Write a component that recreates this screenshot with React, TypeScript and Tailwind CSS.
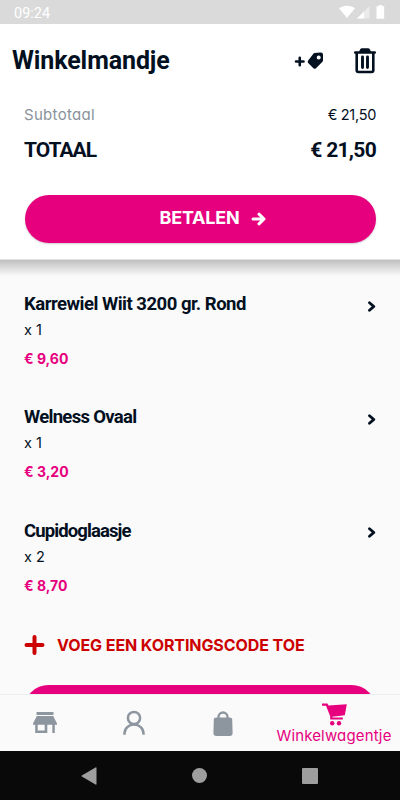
const items = [
  { title: 'Karrewiel Wiit 3200 gr. Rond', amount: 'x 1', price: '€ 9,60', tracking: 'tracking-[-0.5px]' },
  { title: 'Welness Ovaal', amount: 'x 1', price: '€ 3,20', tracking: 'tracking-[-0.7px]' },
  { title: 'Cupidoglaasje', amount: 'x 2', price: '€ 8,70', tracking: 'tracking-[-0.9px]' },
];

const StatusBar = () => (
  <div className="flex h-6 shrink-0 items-center justify-between bg-[#dadada] pr-[15px] pl-[14px] text-white">
    <span className="pt-[3px] font-['Roboto',sans-serif] text-[14.5px] leading-[21px]">09:24</span>
    <svg width="46" height="14" viewBox="0 0 46 14" fill="currentColor">
      <path d="M0 3.2C4.5-.2 11.5-.2 16 3.2L8 13z" />
      <path d="M30.5 1v12.5H18z" opacity=".45" />
      <path d="M25 6.5v7h-7z" />
      <path d="M39.8 0h3.4v1.3h2v12.4h-7.7V1.3h2.3z" />
    </svg>
  </div>
);

const Summary = () => (
  <section className="h-[236px] shrink-0 border-b border-[#e2e2e2] bg-white">
    <div className="flex h-[73px] items-center justify-between pr-6 pl-[12px]">
      <h1 className="pt-px font-['Roboto',sans-serif] text-[25px] font-bold tracking-[-0.1px]">Winkelmandje</h1>
      <div className="flex items-center gap-[30px]">
        <svg width="30" height="18" viewBox="0 0 30 18">
          <path d="M2 9.5h7.500M5.750 5.750v7.500" stroke="currentColor" strokeWidth="2.600" strokeLinecap="round" />
          <path
            d="M20.500 1l6-.6q2.600-.2 2.500 2.400v5.400q0 1-.8 1.800l-6.200 6.200q-1.300 1.300-2.600 0l-5.200-5.200q-1.200-1.200 0-2.600l4.600-6q.7-1.200 1.700-1.400zM24.700 3.400a2 2 0 1 0 0 4 2 2 0 0 0 0-4z"
            fill="currentColor"
            fillRule="evenodd"
          />
        </svg>
        <svg width="22" height="26" viewBox="0 0 22 26" fill="none" stroke="currentColor">
          <path d="M1.200 4.500h19.600" strokeWidth="2.600" strokeLinecap="round" />
          <path d="M4.800 4.500l1-2.600Q6.300.2 7.800.2h6.400q1.500 0 2 1.700l1 2.600z" fill="currentColor" stroke="none" />
          <path d="M2.700 4.500v17.800q0 1.700 1.700 1.700h13.200q1.700 0 1.700-1.700V4.500" strokeWidth="2.600" />
          <path d="M8.500 9v10.500M13.500 9v10.500" strokeWidth="2.900" strokeLinecap="round" />
        </svg>
      </div>
    </div>
    <div className="flex h-9 items-center justify-between px-6 font-['Inter',sans-serif] text-[15px]">
      <span className="tracking-[0.3px] text-[#89929b]">Subtotaal</span>
      <span className="text-[14.500px] tracking-[-0.300px]">€ 21,50</span>
    </div>
    <div className="flex h-[35px] items-center justify-between px-6 font-['Roboto',sans-serif] text-[21px] font-bold">
      <span className="tracking-[-1px]">TOTAAL</span>
      <span className="tracking-[-0.700px]">€ 21,50</span>
    </div>
    <button className="mx-auto mt-[27px] flex h-[48px] w-[351px] items-center justify-center gap-3 rounded-full bg-[#e6007e] pl-[26px] text-white shadow-[0_1px_2px_rgba(0,0,0,0.2)]">
      <span className="pb-1 font-['Inter',sans-serif] text-[18px] font-bold tracking-[-0.250px]">BETALEN</span>
      <svg width="15" height="14" viewBox="0 0 15 14" fill="none" stroke="currentColor" strokeWidth="3" strokeLinecap="round" strokeLinejoin="round">
        <path d="M2 7h10.500M8 2.200L13 7l-5 4.800" />
      </svg>
    </button>
  </section>
);

const NavBar = () => (
  <nav className="flex h-[57px] shrink-0 items-center border-t border-[#eeeeee] bg-[#fafafa] text-[#8d959f]">
    <div className="flex w-[89px] justify-center">
      <svg width="24" height="22" viewBox="0 0 24 22" fill="currentColor">
        <path d="M3.500 0h17v3h-17zM3.800 4h16.400L24 11.500v1.200h-2.200V21h-2.500v-8.300h-5V21H2.200v-8.300H0v-1.200zM4.700 12.700v5.800h7v-5.800z" fillRule="evenodd" />
      </svg>
    </div>
    <div className="flex w-[89px] justify-center">
      <svg width="22" height="26" viewBox="0 0 22 26" fill="none" stroke="currentColor" strokeWidth="2.500">
        <circle cx="11" cy="8" r="6.100" />
        <path d="M1.500 24.800v-1.300a9.500 9 0 0 1 19 0v1.300" />
      </svg>
    </div>
    <div className="flex w-[90px] justify-center">
      <svg width="20" height="25" viewBox="0 0 20 25">
        <path d="M5.500 9V6a4.500 4.500 0 0 1 9 0v3" fill="none" stroke="currentColor" strokeWidth="2.300" />
        <path d="M3 6.500h14q2 0 2.200 2l.4 13.500q0 3-3 3H3.400q-3 0-3-3l.4-13.500q.2-2 2.200-2z" fill="currentColor" />
      </svg>
    </div>
    <div className="flex w-[132px] flex-col items-center pt-px text-[#e6007e]">
      <svg width="25" height="23" viewBox="0 0 25 23" fill="currentColor">
        <path d="M0 .5h5.500l1 2 18.300-1.200-2 11-12.500 1.400v.8h10.500v2H8.200v-3.300L4 2.800H0z" />
        <circle cx="10.200" cy="20.300" r="2.200" />
        <circle cx="17" cy="20.300" r="2.200" />
      </svg>
      <span className="-mb-px pt-px font-['Inter',sans-serif] text-[15px] leading-[18px] tracking-[0.150px]">Winkelwagentje</span>
    </div>
  </nav>
);

const SystemBar = () => (
  <div className="flex h-[49px] shrink-0 items-center justify-between bg-[#090909] pr-[82px] pl-[81px] text-[#9e9e9e]">
    <svg width="16" height="18" viewBox="0 0 16 18" fill="currentColor">
      <path d="M14.500.5q1-.5 1 .5v16q0 1-1 .5L.8 9.500q-.6-.5 0-1z" />
    </svg>
    <span className="size-[15px] rounded-full bg-[#9e9e9e]" />
    <span className="size-4 rounded-[1px] bg-[#9e9e9e]" />
  </div>
);

const App = () => {
  return (
    <main className="flex h-[800px] w-[400px] flex-col overflow-hidden bg-[#fafafa] text-[#03101f] [font-feature-settings:'cv11']">
      <StatusBar />
      <Summary />
      <section className="min-h-0 flex-1 overflow-hidden px-6">
        <div className="-mx-6 mb-[14px] h-4 bg-linear-to-b from-[#c0c0c0] to-[#fafafa]" />
        {items.map(({ title, amount, price, tracking }) => (
          <article key={title} className="flex h-[113.400px] items-start justify-between">
            <div>
              <h2 className={`font-['Roboto',sans-serif] text-[18.500px] leading-7 font-bold ${tracking}`}>{title}</h2>
              <p className="font-['Inter',sans-serif] text-[14.500px] leading-6">{amount}</p>
              <p className="pt-[5px] font-['Inter',sans-serif] text-[14px] leading-6 font-bold text-[#e6007e]">{price}</p>
            </div>
            <svg className="mt-[10.500px]" width="9" height="11" viewBox="0 0 9 11" fill="none" stroke="currentColor" strokeWidth="2.800" strokeLinecap="round" strokeLinejoin="round">
              <path d="M2.500 1.700l4.300 3.800-4.300 3.800" />
            </svg>
          </article>
        ))}
        <div className="mt-[1.800px] flex h-[26px] items-center gap-[13px] text-[#cc0000]">
          <svg width="21" height="20" viewBox="0 0 21 20" stroke="currentColor" strokeWidth="4" strokeLinecap="round">
            <path d="M2.500 10h16M10.500 2v16" />
          </svg>
          <span className="-ml-px font-['Inter',sans-serif] text-[16px] font-bold tracking-[-0.080px]">VOEG EEN KORTINGSCODE TOE</span>
        </div>
        <div className="mt-[27px] h-[49px] rounded-full bg-[#e6007e]" />
      </section>
      <NavBar />
      <SystemBar />
    </main>
  );
};

export default App;
